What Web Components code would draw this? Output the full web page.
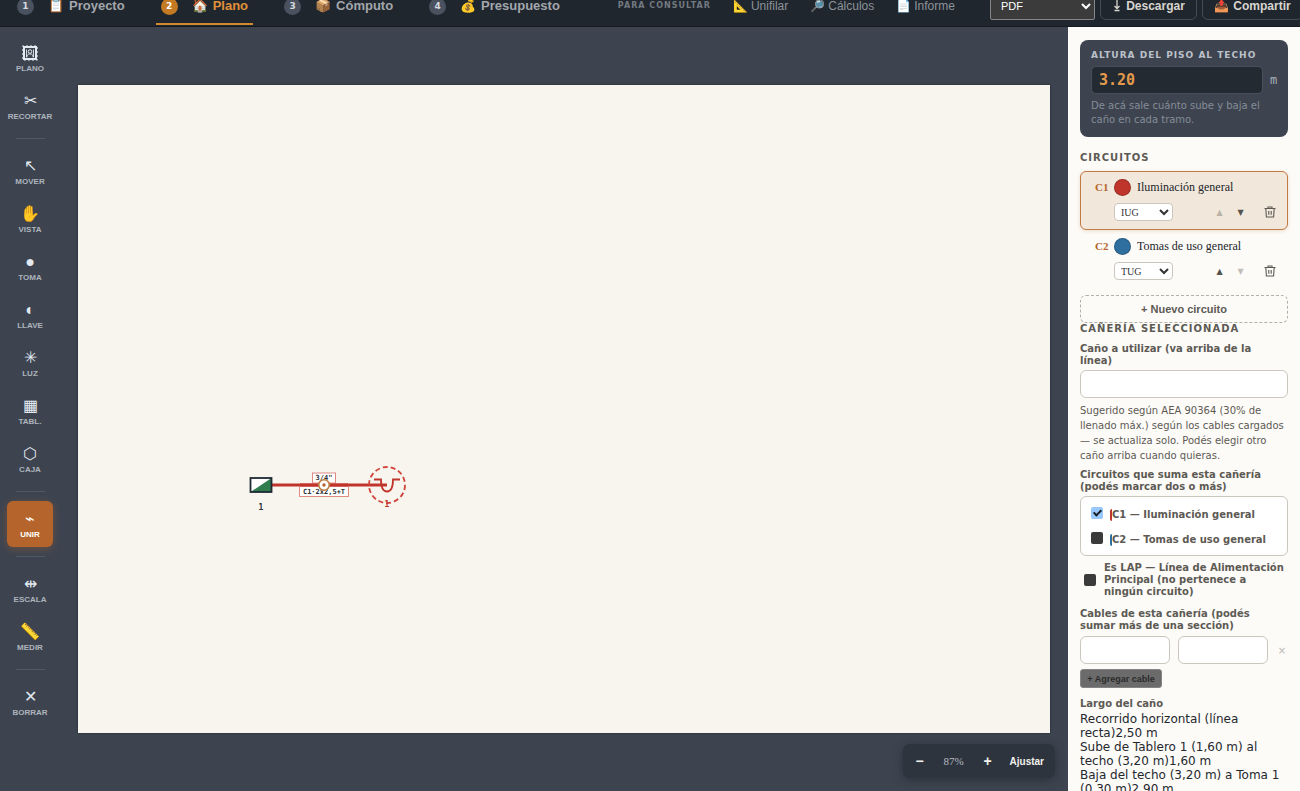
<!DOCTYPE html>
<html lang="es">
<head>
<meta charset="UTF-8">
<meta name="viewport" content="width=device-width, initial-scale=1">
<title>Plano</title>
<style>
:root {
    --ink: #1f262e;
    --slate: #3d4450;
    --orange: #e0913a;
    --copper: #b5652b;
    --paper: #f8f5ee;
    --panel: #fcfbf8;
    --muted: #5d5a54;
    --line: #cbc6be;
    --sans: "Liberation Sans", Arial, sans-serif;
    --wide: "DejaVu Sans", Verdana, sans-serif;
    --serif: "Liberation Serif", "Times New Roman", serif;
    --mono: "DejaVu Sans Mono", monospace;
}
body { margin: 0; font-family: var(--sans); }
</style>
</head>
<body>
<plano-app></plano-app>

<script>
/* paso numerado de la barra superior */
class StepTab extends HTMLElement {
    constructor() {
      super();
      this.attachShadow({ mode: 'open' });
      this.shadowRoot.innerHTML = `
        <style>
:host { display: block; flex: none; }
a {
    display: flex;
    align-items: center;
    gap: 14px;
    height: 33px;
    padding: 2px 5px 0;
    border-bottom: 2px solid transparent;
    color: #a3a7ac;
    font: bold 13px/12px var(--sans);
    text-decoration: none;
    white-space: nowrap;
}
.num {
    display: grid;
    place-items: center;
    width: 17px;
    height: 17px;
    border-radius: 50%;
    background: #4a5260;
    color: #d5d9df;
    font: bold 9px/10px var(--wide);
}
.txt { display: flex; gap: 5px; }
:host([active]) a { color: var(--orange); border-color: #d18a2e; }
:host([active]) .num { background: #c47a22; color: #fff; }
        </style>
        <a href="#"><span class="num">${this.getAttribute('num')}</span><span class="txt"><span>${this.getAttribute('icon')}</span><slot></slot></span></a>
      `;
    }
}

/* documento de consulta */
class DocLink extends HTMLElement {
    constructor() {
      super();
      this.attachShadow({ mode: 'open' });
      this.shadowRoot.innerHTML = `
        <style>
:host { display: block; flex: none; }
a {
    display: flex;
    gap: 3px;
    color: #8d9298;
    font: 12px/12px var(--sans);
    text-decoration: none;
    white-space: nowrap;
}
        </style>
        <a href="#"><span>${this.getAttribute('icon')}</span><slot></slot></a>
      `;
    }
}

class TopBar extends HTMLElement {
    constructor() {
      super();
      this.attachShadow({ mode: 'open' });
      this.shadowRoot.innerHTML = `
        <style>
:host { display: block; background: var(--ink); border-bottom: 1px solid #151a20; }
header {
    display: flex;
    align-items: center;
    height: 40px;
    margin-top: -14px;
    padding-left: 12px;
}
.steps { display: flex; gap: 26px; flex: none; }
.docs { display: flex; align-items: center; gap: 22px; margin-left: 53px; flex: none; }
.caption { font: bold 8px/10px var(--wide); letter-spacing: 1px; color: #737980; }
.actions { display: flex; align-items: center; gap: 5px; margin-left: auto; margin-right: -3px; flex: none; }
select {
    color-scheme: dark;
    width: 105px;
    height: 27px;
    padding: 0 6px;
    border: 1px solid #85858a;
    border-radius: 2px;
    background: #3b3b3b;
    color: #fff;
    font: 11px var(--sans);
}
button {
    display: flex;
    align-items: center;
    justify-content: center;
    gap: 4px;
    width: 97px;
    height: 28px;
    padding: 0;
    border: 1px solid #454c56;
    border-radius: 6px;
    background: transparent;
    color: #d8d5cf;
    font: bold 12px/12px var(--sans);
    white-space: nowrap;
}
button + button { width: 101px; }
        </style>
        <header>
          <nav class="steps">
            <step-tab num="1" icon="📋">Proyecto</step-tab>
            <step-tab num="2" icon="🏠" active>Plano</step-tab>
            <step-tab num="3" icon="📦">Cómputo</step-tab>
            <step-tab num="4" icon="💰">Presupuesto</step-tab>
          </nav>
          <nav class="docs">
            <span class="caption">PARA CONSULTAR</span>
            <doc-link icon="📐">Unifilar</doc-link>
            <doc-link icon="🔎">Cálculos</doc-link>
            <doc-link icon="📄">Informe</doc-link>
          </nav>
          <div class="actions">
            <select aria-label="Formato"><option>PDF</option></select>
            <button type="button">
              <svg width="10" height="12" viewBox="0 0 10 12" fill="none" stroke="currentColor" stroke-width="1.300"><path d="M5 0v8M2.500 6l2.500 2.500 2.500-2.500M2.500 10.500h5"/></svg>
              Descargar
            </button>
            <button type="button"><span>📤</span>Compartir</button>
          </div>
        </header>
      `;
    }
}

class ToolButton extends HTMLElement {
    constructor() {
      super();
      this.attachShadow({ mode: 'open' });
      this.shadowRoot.innerHTML = `
        <style>
:host { display: block; }
button {
    display: flex;
    flex-direction: column;
    align-items: center;
    justify-content: center;
    gap: 1px;
    width: 46px;
    height: 46px;
    padding: 0;
    border: none;
    border-radius: 6px;
    background: transparent;
    color: #aeb4bd;
    white-space: nowrap;
}
.icon { font: 16px/20px var(--sans); color: #e3e9f0; }
.label { font: bold 8px/10px var(--sans); }
::slotted(svg) { display: block; margin: 2px 0; }
:host([active]) button { background: var(--copper); box-shadow: 0 2px 8px #b5652b66; }
:host([active]) span { color: #fff; }
        </style>
        <button type="button"><span class="icon"><slot name="icon">${this.getAttribute('icon')}</slot></span><span class="label"><slot></slot></span></button>
      `;
    }
}

class ToolRail extends HTMLElement {
    constructor() {
      super();
      this.attachShadow({ mode: 'open' });
      this.shadowRoot.innerHTML = `
        <style>
:host {
    display: flex;
    flex-direction: column;
    align-items: center;
    gap: 2px;
    width: 60px;
    padding-top: 8px;
    box-sizing: border-box;
}
hr { width: 29px; height: 1px; margin: 7px 0; border: none; background: #505863; }
        </style>
        <tool-button>
          <svg slot="icon" width="16" height="16" viewBox="0 0 16 16" fill="none" stroke="#e3e9f0">
            <rect x="2" y="2" width="12" height="12" stroke-width="2"/>
            <rect x="1" y="1" width="14" height="14" stroke-width="1.200" stroke-dasharray="2 2" stroke-dashoffset="1"/>
            <circle cx="8" cy="6.500" r="1.800" stroke-width="1"/>
            <path d="M4.800 12.500c0-2.500 1.200-3.600 3.200-3.600s3.200 1.100 3.200 3.600M4.500 4.500v7.500M11.500 4.500v7.500" stroke-width=".9"/>
          </svg>
          PLANO
        </tool-button>
        <tool-button icon="✂&#xFE0E;">RECORTAR</tool-button>
        <hr>
        <tool-button icon="↖&#xFE0E;">MOVER</tool-button>
        <tool-button icon="✋">VISTA</tool-button>
        <tool-button icon="●">TOMA</tool-button>
        <tool-button icon="◐">LLAVE</tool-button>
        <tool-button icon="✳&#xFE0E;">LUZ</tool-button>
        <tool-button icon="▦">TABL.</tool-button>
        <tool-button icon="⬡">CAJA</tool-button>
        <hr>
        <tool-button icon="⌁" active>UNIR</tool-button>
        <hr>
        <tool-button icon="⇹">ESCALA</tool-button>
        <tool-button icon="📏">MEDIR</tool-button>
        <hr>
        <tool-button icon="✕">BORRAR</tool-button>
      `;
    }
}

/* hoja con el tablero, el caño y la toma */
class PlanCanvas extends HTMLElement {
    constructor() {
      super();
      this.attachShadow({ mode: 'open' });
      this.shadowRoot.innerHTML = `
        <style>
:host {
    display: grid;
    align-content: center;
    position: relative;
    padding: 0 18px;
    min-width: 0;
}
svg { display: block; width: 100%; aspect-ratio: 3 / 2; background: var(--paper); box-shadow: 0 0 2px #20252d; }
text { font-family: var(--mono); font-weight: bold; font-size: 7px; text-anchor: middle; fill: #2a2f36; }
.tag { font-size: 8px; }
zoom-bar { position: absolute; right: 13px; bottom: 13px; }
        </style>
        <svg viewBox="0 0 972 648">
          <path d="M194 400H309" stroke="#c0352b" stroke-width="3"/>
          <rect x="172.500" y="393" width="21" height="14" fill="#fff"/>
          <path d="M193.500 393v14h-21z" fill="#2f7d4f"/>
          <rect x="172.500" y="393" width="21" height="14" fill="none" stroke="#1f2a33" stroke-width="1.800"/>
          <text class="tag" x="183" y="425">1</text>
          <rect x="234.500" y="388" width="23" height="10" fill="#fff" stroke="#e08a84"/>
          <text x="246" y="395">3/4"</text>
          <rect x="221.500" y="401.500" width="49" height="10" fill="#fff" stroke="#e08a84"/>
          <text x="246" y="409">C1·2x2,5+T</text>
          <path d="M222 400H270" stroke="#c0352b" stroke-width="3"/>
          <circle cx="246" cy="400" r="5.300" fill="#fff" stroke="#bd7b3e" stroke-width="1.600"/>
          <circle cx="246" cy="400" r="1.700" fill="#b5652b"/>
          <circle cx="309" cy="400" r="18" fill="none" stroke="#d2453c" stroke-width="1.800" stroke-dasharray="5 3"/>
          <path d="M296 394.500h7c0 8 2 12 6 12s6-4 6-12h7" fill="none" stroke="#c0352b" stroke-width="1.800"/>
          <text class="tag" x="309" y="422" style="fill:#c0352b">1</text>
        </svg>
        <zoom-bar></zoom-bar>
      `;
    }
}

class ZoomBar extends HTMLElement {
    constructor() {
      super();
      this.attachShadow({ mode: 'open' });
      this.shadowRoot.innerHTML = `
        <style>
:host {
    display: flex;
    align-items: center;
    height: 34px;
    padding: 0 3px;
    border-radius: 7px;
    background: #2d343e;
    box-shadow: 0 2px 8px #1a1f2680;
}
button {
    height: 28px;
    min-width: 28px;
    padding: 0 8px;
    border: none;
    background: transparent;
    color: #f3f1ec;
    font: bold 10px var(--sans);
}
.sign { font-size: 14px; padding: 0; }
output { width: 40px; text-align: center; font: 11px var(--serif); color: #b6bbc2; }
        </style>
        <button type="button" class="sign" aria-label="Alejar">−</button>
        <output>87%</output>
        <button type="button" class="sign" aria-label="Acercar">+</button>
        <button type="button">Ajustar</button>
      `;
    }
}

class CircuitRow extends HTMLElement {
    constructor() {
      super();
      this.attachShadow({ mode: 'open' });
      const code = this.getAttribute('code');
      const up = this.hasAttribute('first') ? 'disabled' : '';
      const down = this.hasAttribute('last') ? 'disabled' : '';
      this.shadowRoot.innerHTML = `
        <style>
:host {
    display: flex;
    flex-direction: column;
    gap: 7px;
    height: 59px;
    padding: 7px 7px 0 14px;
    box-sizing: border-box;
    border: 1px solid transparent;
    border-radius: 6px;
}
:host([selected]) { background: #f1e7da; border-color: #c27a45; box-shadow: 0 1px 4px #b5652b33; }
.row { display: flex; align-items: center; }
label { width: 19px; font: bold 11px/17px var(--serif); color: var(--copper); }
.swatch { width: 17px; height: 17px; padding: 0; border: 1px solid #00000033; border-radius: 50%; flex: none; }
input {
    flex: 1;
    min-width: 0;
    height: 17px;
    margin-left: 6px;
    padding: 0;
    border: none;
    background: transparent;
    color: #22262b;
    font: 12px/17px var(--serif);
}
select {
    width: 59px;
    height: 18px;
    margin-left: 19px;
    padding: 0 2px;
    border: 1px solid var(--line);
    border-radius: 4px;
    background: #fff;
    color: #333;
    font: 10px var(--serif);
}
.icons { display: flex; align-items: center; margin-left: auto; }
.icons button { width: 21px; height: 18px; padding: 0; border: none; background: transparent; color: #55524d; font: 8px var(--wide); }
.icons button:disabled { opacity: 0.35; }
.icons .del { display: grid; place-items: center; margin-left: 8px; }
        </style>
        <div class="row">
          <label for="name">${code}</label>
          <button type="button" class="swatch" aria-label="Color" style="background:${this.getAttribute('color')}"></button>
          <input id="name" value="${this.getAttribute('name')}">
        </div>
        <div class="row">
          <select aria-label="Tipo"><option>${this.getAttribute('kind')}</option></select>
          <div class="icons">
            <button type="button" ${up}>▲</button>
            <button type="button" ${down}>▼</button>
            <button type="button" class="del" aria-label="Eliminar">
              <svg width="12" height="12" viewBox="0 0 12 12" fill="none" stroke="#5d5a54" stroke-width="1.100"><path d="M.5 2.500h11M4 2.500v-1.500h4v1.500M1.800 2.500l.6 8.500h7.200l.6-8.500M4.800 5v3.800M7.200 5v3.800"/></svg>
            </button>
          </div>
        </div>
      `;
    }
}

class HeightCard extends HTMLElement {
    constructor() {
      super();
      this.attachShadow({ mode: 'open' });
      this.shadowRoot.innerHTML = `
        <style>
:host { display: block; padding: 8px 11px 10px; border-radius: 8px; background: var(--slate); }
label { display: block; font: bold 9px/14px var(--wide); letter-spacing: 1px; color: #bcc1c9; white-space: nowrap; }
.row { display: flex; align-items: center; gap: 7px; margin: 4px 0 5px; font: 12px var(--mono); color: #aab0b9; }
input {
    width: 172px;
    height: 28px;
    padding: 0 7px;
    box-sizing: border-box;
    border: 1px solid #48505c;
    border-radius: 5px;
    background: #242a32;
    color: #e39a4c;
    font: bold 15px var(--mono);
}
p { margin: 0; font: 10px/14px var(--wide); color: #858c97; }
        </style>
        <label for="alto">ALTURA DEL PISO AL TECHO</label>
        <div class="row"><input id="alto" value="3.20"><span>m</span></div>
        <p>De acá sale cuánto sube y baja el caño en cada tramo.</p>
      `;
    }
}

class PipePanel extends HTMLElement {
    constructor() {
      super();
      this.attachShadow({ mode: 'open' });
      this.shadowRoot.innerHTML = `
        <style>
:host { display: block; color: var(--muted); font: bold 10px/12px var(--wide); }
label, .title { display: block; padding-right: 8px; }
h2 { margin: 0 0 8px; font: bold 10px/12px var(--wide); letter-spacing: 1px; white-space: nowrap; }
input:not([type]) {
    display: block;
    width: 100%;
    height: 28px;
    box-sizing: border-box;
    border: 1px solid var(--line);
    border-radius: 6px;
    background: #fff;
}
#cano { margin-top: 3px; }
.hint { margin: 5px 0 6px; font: 10px/15px var(--wide); }
.box {
    display: grid;
    gap: 13px;
    margin: 3px 0 6px;
    padding: 12px 10px 9px;
    border: 1px solid var(--line);
    border-radius: 6px;
    background: #fff;
}
.check { display: flex; gap: 7px; align-items: center; padding: 0; white-space: nowrap; }
.check span { border-left: 2px solid var(--tone); border-radius: 2px; }
input[type=checkbox] {
    appearance: none;
    display: grid;
    place-items: center;
    flex: none;
    width: 12px;
    height: 12px;
    margin: 0;
    border-radius: 2px;
    background: #3b3b3b;
}
.box input { margin-top: -5px; }
input[type=checkbox]:checked { background: #99c8ff; }
input[type=checkbox]:checked::after {
    content: "";
    width: 3px;
    height: 6px;
    margin-top: -2px;
    border: solid #1c1c1c;
    border-width: 0 2px 2px 0;
    transform: rotate(45deg);
}
.lap { display: flex; align-items: center; gap: 8px; padding: 0 0 0 4px; margin-bottom: 10px; white-space: nowrap; }
.cables { display: grid; grid-template-columns: 1fr 1fr 12px; align-items: center; gap: 8px; margin: 4px 0 5px; }
.cables button { padding: 0; border: none; background: none; color: #bbb8b2; font: 10px var(--wide); }
.add { display: block; width: 82px; height: 19px; padding: 0; border: 1px solid #858585; border-radius: 3px; background: #6b6b6b; color: #2b2b2b; font: bold 9px var(--sans); white-space: nowrap; }
.add + .title { margin-top: 10px; }
ul { margin: 2px 0 0; padding: 0; list-style: none; font: 12px/14px var(--wide); color: #24282d; }
        </style>
        <h2>CAÑERÍA SELECCIONADA</h2>
        <label for="cano">Caño a utilizar (va arriba de la línea)</label>
        <input id="cano">
        <p class="hint">Sugerido según AEA 90364 (30% de llenado máx.) según los cables cargados — se actualiza solo. Podés elegir otro caño arriba cuando quieras.</p>
        <span class="title">Circuitos que suma esta cañería (podés marcar dos o más)</span>
        <div class="box">
          <label class="check" style="--tone:#c0352b"><input type="checkbox" checked><span>C1 — Iluminación general</span></label>
          <label class="check" style="--tone:#2f6f9f"><input type="checkbox"><span>C2 — Tomas de uso general</span></label>
        </div>
        <label class="lap"><input type="checkbox"><span>Es LAP — Línea de Alimentación<br>Principal (no pertenece a<br>ningún circuito)</span></label>
        <label for="cable">Cables de esta cañería (podés sumar más de una sección)</label>
        <div class="cables">
          <input id="cable"><input aria-label="Sección"><button type="button">×</button>
        </div>
        <button type="button" class="add">+ Agregar cable</button>
        <span class="title">Largo del caño</span>
        <ul>
          <li>Recorrido horizontal (línea recta)2,50 m</li>
          <li>Sube de Tablero 1 (1,60 m) al techo (3,20 m)1,60 m</li>
          <li>Baja del techo (3,20 m) a Toma 1 (0,30 m)2,90 m</li>
        </ul>
      `;
    }
}

class SidePanel extends HTMLElement {
    constructor() {
      super();
      this.attachShadow({ mode: 'open' });
      this.shadowRoot.innerHTML = `
        <style>
:host { display: block; padding: 13px 12px 0 11px; border-left: 1px solid #fff; background: var(--panel); overflow: hidden; box-sizing: border-box; }
h2 { margin: 15px 0 7px; font: bold 10px/12px var(--wide); letter-spacing: 1px; color: var(--muted); }
.new {
    display: block;
    width: 100%;
    height: 28px;
    margin-top: 6px;
    border: 1px dashed #b5b0a7;
    border-radius: 6px;
    background: transparent;
    color: var(--muted);
    font: bold 11px var(--sans);
}
        </style>
        <height-card></height-card>
        <h2>CIRCUITOS</h2>
        <circuit-row code="C1" name="Iluminación general" kind="IUG" color="#c0352b" selected first></circuit-row>
        <circuit-row code="C2" name="Tomas de uso general" kind="TUG" color="#2f6f9f" last></circuit-row>
        <button type="button" class="new">+ Nuevo circuito</button>
        <pipe-panel></pipe-panel>
      `;
    }
}

class PlanoApp extends HTMLElement {
    constructor() {
      super();
      this.attachShadow({ mode: 'open' });
      this.shadowRoot.innerHTML = `
        <style>
:host { display: grid; grid-template-rows: auto minmax(0, 1fr); height: 100vh; overflow: hidden; background: var(--slate); }
main { display: grid; grid-template-columns: auto minmax(0, 1fr) 232px; min-height: 0; }
        </style>
        <top-bar></top-bar>
        <main>
          <tool-rail></tool-rail>
          <plan-canvas></plan-canvas>
          <side-panel></side-panel>
        </main>
      `;
    }
}

customElements.define('step-tab', StepTab);
customElements.define('doc-link', DocLink);
customElements.define('top-bar', TopBar);
customElements.define('tool-button', ToolButton);
customElements.define('tool-rail', ToolRail);
customElements.define('zoom-bar', ZoomBar);
customElements.define('plan-canvas', PlanCanvas);
customElements.define('circuit-row', CircuitRow);
customElements.define('height-card', HeightCard);
customElements.define('pipe-panel', PipePanel);
customElements.define('side-panel', SidePanel);
customElements.define('plano-app', PlanoApp);
</script>
</body>
</html>
